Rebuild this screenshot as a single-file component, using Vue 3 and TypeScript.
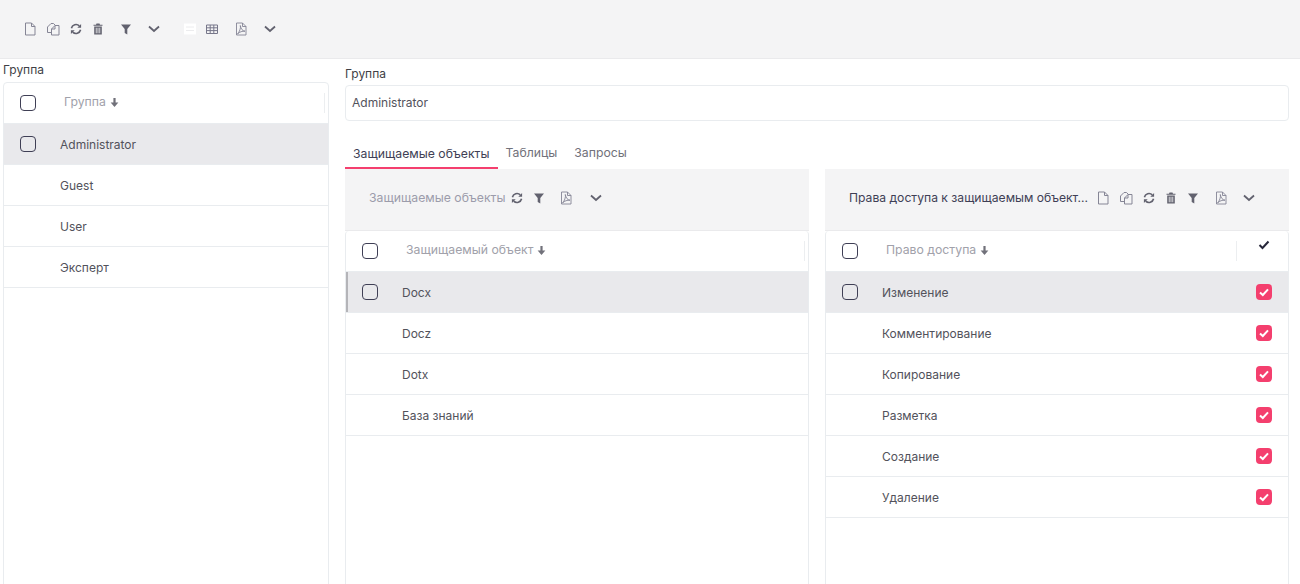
<template>
  <div class="page">
    <svg class="sprite" aria-hidden="true">
      <symbol id="i-file" viewBox="0 0 14 14"><path d="M2.500 1h6l3.500 3.500V13H2.500zM8.500 1v3.500H12" fill="none" stroke="currentColor" /></symbol>
      <symbol id="i-copy" viewBox="0 0 14 14"><path d="M5 1.500h2.500L9.500 3.500M5 1.500 1.500 5v5.500H5M9 3.500h4V13H5.500V7zM9 3.500V7H5.500" fill="none" stroke="currentColor" /></symbol>
      <symbol id="i-refresh" viewBox="0 0 14 14"><path d="M2.400 6.200A4.700 4.700 0 0 1 10.300 3.900M11.600 7.800a4.700 4.700 0 0 1-7.900 2.300" fill="none" stroke="currentColor" stroke-width="1.600" /><path d="M12.100 2v3.800H8.300zM1.900 12V8.200h3.800z" fill="currentColor" /></symbol>
      <symbol id="i-trash" viewBox="0 0 14 14"><path d="M5.500 1.500h3l.5 1.200h2.500v1.100h-9V2.700H5zM3.200 4.500h7.600V12.500H3.200zM4.800 5.800v5.400h.8V5.800zM6.600 5.800v5.400h.8V5.800zM8.400 5.800v5.400h.8V5.800z" fill="currentColor" fill-rule="evenodd" /></symbol>
      <symbol id="i-filter" viewBox="0 0 14 14"><path d="M2 2.500h10L8.300 7v5.500L5.700 11V7z" fill="currentColor" /></symbol>
      <symbol id="i-chevron" viewBox="0 0 14 14"><path d="M2 4.500 7 9l5-4.500" fill="none" stroke="currentColor" stroke-width="1.800" /></symbol>
      <symbol id="i-form" viewBox="0 0 14 14"><path d="M1 1.500h12v11H1z" fill="#fff" /><path d="M3 5h8M3 8.500h8" fill="none" stroke="#ececee" /></symbol>
      <symbol id="i-table" viewBox="0 0 14 14"><path d="M1.500 3h11v8.500h-11zM1.500 5.800h11M1.500 8.600h11M5.200 3v8.500M8.800 3v8.500" fill="none" stroke="#77778a" /></symbol>
      <symbol id="i-pdf" viewBox="0 0 14 14"><path d="M2.500 1h6l3.500 3.500V13H2.500zM8.500 1v3.500H12M3.500 12C5.500 10 7 6 6.300 3.500 7 7 8.500 9 11 9.200 8.500 9 5.500 9.800 3.500 12z" fill="none" stroke="currentColor" stroke-width=".9" /></symbol>
      <symbol id="i-sort" viewBox="0 0 10 10"><path d="M4 1h2v4h2.500L5 9 1.500 5H4z" fill="currentColor" /></symbol>
    </svg>

    <header class="toolbar">
      <span v-for="t in mainTools" :key="t.key" class="tool" :class="t.cls">
        <svg class="icon"><use :href="'#i-' + t.icon" /></svg>
      </span>
    </header>

    <main class="content">
      <section class="left">
        <div class="left-label">Группа</div>
        <div class="grid">
          <div class="row head">
            <span class="cell-check"><span class="check"></span></span>
            <span class="head-title">Группа <svg class="sort"><use href="#i-sort" /></svg></span>
            <span class="divider"></span>
          </div>
          <div v-for="(g, i) in groups" :key="g" class="row" :class="{ selected: i === 0 }">
            <span class="cell-check"><span v-if="i === 0" class="check"></span></span>
            <span class="name">{{ g }}</span>
          </div>
        </div>
      </section>

      <section class="right">
        <label class="field-label">Группа</label>
        <div class="input">Administrator</div>

        <nav class="tabs">
          <span v-for="(t, i) in tabs" :key="t" class="tab" :class="{ active: i === 0 }">{{ t }}</span>
        </nav>

        <div class="panels">
          <div class="panel">
            <div class="panel-bar">
              <span class="panel-title muted">Защищаемые объекты</span>
              <span v-for="t in objectTools" :key="t.key" class="tool" :class="t.cls">
                <svg class="icon"><use :href="'#i-' + t.icon" /></svg>
              </span>
            </div>
            <div class="grid inner marked">
              <div class="row head">
                <span class="cell-check"><span class="check"></span></span>
                <span class="head-title">Защищаемый объект <svg class="sort"><use href="#i-sort" /></svg></span>
                <span class="divider"></span>
              </div>
              <div v-for="(o, i) in objects" :key="o" class="row" :class="{ selected: i === 0 }">
                <span class="cell-check"><span v-if="i === 0" class="check"></span></span>
                <span class="name">{{ o }}</span>
              </div>
            </div>
          </div>

          <div class="panel">
            <div class="panel-bar">
              <span class="panel-title long">Права доступа к защищаемым объект...</span>
              <span v-for="t in rightTools" :key="t.key" class="tool" :class="t.cls">
                <svg class="icon"><use :href="'#i-' + t.icon" /></svg>
              </span>
            </div>
            <div class="grid inner">
              <div class="row head">
                <span class="cell-check"><span class="check"></span></span>
                <span class="head-title">Право доступа <svg class="sort"><use href="#i-sort" /></svg></span>
                <span class="divider with-check"></span>
                <span class="head-mark">
                  <svg viewBox="0 0 12 10" width="12" height="10"><path d="M1.500 5 4.500 8l6-6.500" fill="none" stroke="currentColor" stroke-width="2" /></svg>
                </span>
              </div>
              <div v-for="(r, i) in accessRights" :key="r" class="row" :class="{ selected: i === 0 }">
                <span class="cell-check"><span v-if="i === 0" class="check"></span></span>
                <span class="name">{{ r }}</span>
                <span class="check on">
                  <svg viewBox="0 0 16 16" width="16" height="16"><path d="M4 8.500 6.800 11 12 5.300" fill="none" stroke="#fff" stroke-width="2" /></svg>
                </span>
              </div>
            </div>
          </div>
        </div>
      </section>
    </main>
  </div>
</template>

<script setup lang="ts">
interface Tool {
  key: string
  icon: string
  cls?: string
}

const tool = (icon: string, cls = ''): Tool => ({ key: icon + cls, icon, cls })

const mainTools: Tool[] = [
  tool('file', 'thin'),
  tool('copy', 'thin'),
  tool('refresh'),
  tool('trash', 'tight'),
  tool('filter', 'wide g4'),
  tool('chevron', 'wide'),
  tool('form', 'g10'),
  tool('table', 'tight'),
  tool('pdf', 'wide g5 thin'),
  tool('chevron', 'wide g1'),
]

const objectTools: Tool[] = [
  tool('refresh'),
  tool('filter', 'tight'),
  tool('pdf', 'wide g2 thin'),
  tool('chevron', 'wide g2'),
]

const rightTools: Tool[] = [
  tool('file', 'thin'),
  tool('copy', 'thin'),
  tool('refresh'),
  tool('trash', 'tight'),
  tool('filter', 'tight g1'),
  tool('pdf', 'wide g4 thin'),
  tool('chevron', 'wide'),
]

const groups = ['Administrator', 'Guest', 'User', 'Эксперт']
const tabs = ['Защищаемые объекты', 'Таблицы', 'Запросы']
const objects = ['Docx', 'Docz', 'Dotx', 'База знаний']
const accessRights = ['Изменение', 'Комментирование', 'Копирование', 'Разметка', 'Создание', 'Удаление']
</script>

<style>
html,
body {
  margin: 0;
  overflow: hidden;
  background: #fff;
}
</style>

<style scoped>
.page {
  height: 584px;
  overflow: hidden;
  font-family: Inter, "Noto Sans", sans-serif;
  font-size: 12px;
  color: #52525b;
}

.sprite {
  position: absolute;
  width: 0;
  height: 0;
}

.toolbar {
  display: flex;
  align-items: center;
  box-sizing: border-box;
  height: 59px;
  padding-left: 18px;
  background: #f4f4f5;
  border-bottom: 1px solid #eaeaec;
}

.tool {
  display: flex;
  flex: none;
  justify-content: center;
  width: 23px;
  color: #62626f;
}

.tool.wide { width: 28px; }
.tool.tight { width: 21px; }
.tool.g1 { margin-left: 1px; }
.tool.g2 { margin-left: 2px; }
.tool.g4 { margin-left: 4px; }
.tool.g5 { margin-left: 5px; }
.tool.g10 { margin-left: 10px; }
.tool.thin { color: #858595; }

.icon {
  width: 14px;
  height: 14px;
}

.content {
  display: flex;
  height: 525px;
}

.left {
  flex: none;
  box-sizing: border-box;
  width: 329px;
  padding: 3px 0 0 3px;
}

.left-label {
  height: 20px;
  line-height: 15px;
  color: #3f3f46;
}

.grid {
  height: 600px;
  background: #fff;
  border: 1px solid #e9ecef;
  border-radius: 4px;
}

.row {
  display: flex;
  align-items: center;
  box-sizing: border-box;
  height: 41px;
  border-bottom: 1px solid #e9ecef;
  color: #52525b;
}

.row.head {
  font-size: 12.25px;
  color: #a1a1aa;
}

.row.selected {
  background: #e9e9ec;
}

.cell-check {
  display: flex;
  flex: none;
  align-items: center;
  box-sizing: border-box;
  width: 56px;
  padding-left: 16px;
}

.check {
  display: flex;
  flex: none;
  align-items: center;
  justify-content: center;
  box-sizing: border-box;
  width: 16px;
  height: 16px;
  border: 1px solid #3f3f55;
  border-radius: 4px;
  background: #fff;
}

.selected .check {
  background: transparent;
}

.check.on,
.selected .check.on {
  margin-right: 16px;
  border: none;
  background: #f43f6e;
}

.name {
  flex: 1;
  min-width: 0;
}

.head-title {
  display: flex;
  flex: 1;
  align-items: center;
  gap: 3px;
  margin-left: 4px;
  padding-bottom: 3px;
}

.sort {
  width: 11px;
  height: 11px;
  margin-top: 2px;
  color: #71717a;
}

.divider {
  flex: none;
  width: 1px;
  height: 20px;
  margin-right: 3px;
  background: #eceef0;
}

.divider.with-check {
  margin-right: 0;
}

.head-mark {
  display: flex;
  flex: none;
  justify-content: center;
  box-sizing: border-box;
  width: 51px;
  padding-left: 3px;
  margin-top: -12px;
  color: #27273a;
}

.right {
  flex: 1;
  min-width: 0;
  box-sizing: border-box;
  padding: 8px 11px 0 16px;
}

.field-label {
  display: block;
  height: 18px;
  line-height: 14px;
  color: #3f3f46;
}

.input {
  box-sizing: border-box;
  height: 36px;
  padding: 0 6px;
  line-height: 34px;
  border: 1px solid #e9ecef;
  border-radius: 4px;
  color: #52525b;
}

.tabs {
  display: flex;
  height: 30px;
  margin-top: 18px;
}

.tab {
  box-sizing: border-box;
  height: 30px;
  padding: 0 8px;
  font-size: 12.25px;
  line-height: 28px;
  color: #71717a;
}

.tab:last-child {
  margin-left: 1px;
}

.tab.active {
  padding-top: 1px;
  color: #3f3f55;
  border-bottom: 2px solid #f43f6e;
}

.panels {
  display: flex;
  gap: 16px;
}

.panel {
  flex: none;
  width: 464px;
}

.panel-bar {
  display: flex;
  align-items: center;
  box-sizing: border-box;
  height: 62px;
  padding: 0 0 4px 24px;
  background: #f4f4f5;
  border-bottom: 1px solid #eaeaec;
}

.panel-title {
  flex: none;
  font-size: 12.25px;
  color: #3f3f55;
}

.panel-title.long {
  margin-right: 3px;
  font-size: 12.15px;
}

.panel-title.muted {
  color: #9c9cab;
}

.inner {
  border-top: none;
}

.marked .row.selected {
  box-shadow: inset 2px 0 0 #b4b4b8;
}
</style>
